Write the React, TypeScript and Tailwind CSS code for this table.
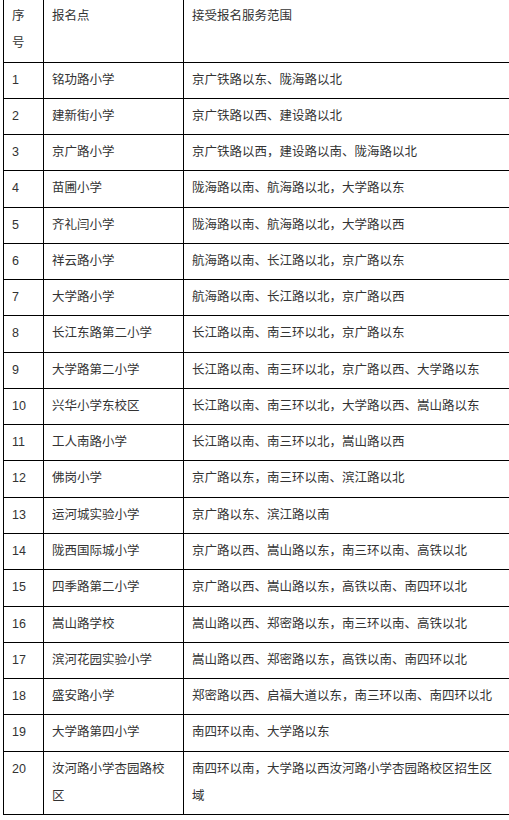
import React from "react";

const rows: [string, string, string][] = [
  ["1", "铭功路小学", "京广铁路以东、陇海路以北"],
  ["2", "建新街小学", "京广铁路以西、建设路以北"],
  ["3", "京广路小学", "京广铁路以西，建设路以南、陇海路以北"],
  ["4", "苗圃小学", "陇海路以南、航海路以北，大学路以东"],
  ["5", "齐礼闫小学", "陇海路以南、航海路以北，大学路以西"],
  ["6", "祥云路小学", "航海路以南、长江路以北，京广路以东"],
  ["7", "大学路小学", "航海路以南、长江路以北，京广路以西"],
  ["8", "长江东路第二小学", "长江路以南、南三环以北，京广路以东"],
  ["9", "大学路第二小学", "长江路以南、南三环以北，京广路以西、大学路以东"],
  ["10", "兴华小学东校区", "长江路以南、南三环以北，大学路以西、嵩山路以东"],
  ["11", "工人南路小学", "长江路以南、南三环以北，嵩山路以西"],
  ["12", "佛岗小学", "京广路以东，南三环以南、滨江路以北"],
  ["13", "运河城实验小学", "京广路以东、滨江路以南"],
  ["14", "陇西国际城小学", "京广路以西、嵩山路以东，南三环以南、高铁以北"],
  ["15", "四季路第二小学", "京广路以西、嵩山路以东，高铁以南、南四环以北"],
  ["16", "嵩山路学校", "嵩山路以西、郑密路以东，南三环以南、高铁以北"],
  ["17", "滨河花园实验小学", "嵩山路以西、郑密路以东，高铁以南、南四环以北"],
  ["18", "盛安路小学", "郑密路以西、启福大道以东，南三环以南、南四环以北"],
  ["19", "大学路第四小学", "南四环以南、大学路以东"],
  ["20", "汝河路小学杏园路校区", "南四环以南，大学路以西汝河路小学杏园路校区招生区域"],
];

const cell =
  "border border-black px-[8px] py-[4px] align-top text-left font-normal leading-[27.26px]";

export default function App() {
  return (
    <div
      className="w-[509px] h-[820px] overflow-hidden bg-white pl-[3px] text-[12.5px] text-[#333333]"
      style={{ fontFamily: '"Liberation Sans", "Noto Sans CJK SC", sans-serif' }}
    >
      <table className="-mt-[2px] w-[509px] table-fixed border-collapse">
        <colgroup>
          <col className="w-[40px]" />
          <col className="w-[140px]" />
          <col className="w-[329px]" />
        </colgroup>
        <thead>
          <tr>
            <th className={cell}>序号</th>
            <th className={cell}>报名点</th>
            <th className={cell}>接受报名服务范围</th>
          </tr>
        </thead>
        <tbody>
          {rows.map((r) => (
            <tr key={r[0]}>
              <td className={cell}>{r[0]}</td>
              <td className={cell}>{r[1]}</td>
              <td className={cell}>{r[2]}</td>
            </tr>
          ))}
        </tbody>
      </table>
    </div>
  );
}
